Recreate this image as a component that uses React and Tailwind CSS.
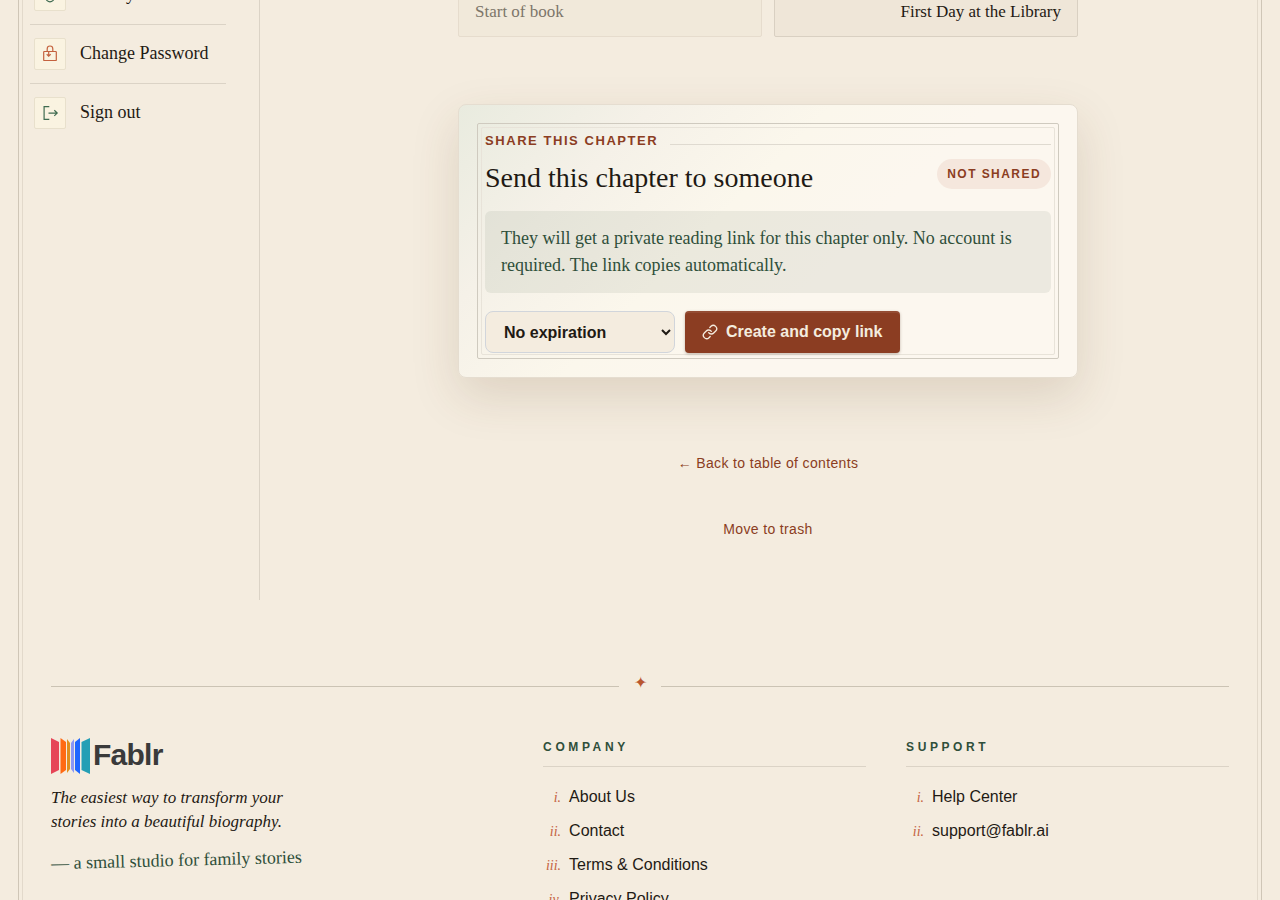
import { Link } from "lucide-react";

// ====================================================================
// Icons
// ====================================================================
const PrivacyIcon = () => (
  <svg width="18" height="18" viewBox="0 0 18 18" fill="none" stroke="currentColor" strokeWidth="1.3" aria-hidden="true">
    <path d="M6 8V4h6v4" />
    <circle cx="9" cy="11.8" r="4" />
  </svg>
);

const PasswordIcon = () => (
  <svg width="18" height="18" viewBox="0 0 18 18" fill="none" stroke="currentColor" strokeWidth="1.2" aria-hidden="true">
    <rect x="2.7" y="6.5" width="12.6" height="9" rx="0.6" />
    <path d="M6.2 6.5V3.8a2.8 2.8 0 0 1 5.6 0v2.7" />
    <path d="M7.7 6.8v4.2M5.7 9.3l2 1.8 2-1.8" />
  </svg>
);

const SignOutIcon = () => (
  <svg width="18" height="18" viewBox="0 0 18 18" fill="none" stroke="currentColor" strokeWidth="1.2" aria-hidden="true">
    <path d="M8.3 2.6H3.1v12.8h5.2" />
    <path d="M7.5 9.1h8.6M13.3 6.3l2.9 2.8-2.9 2.8" />
  </svg>
);

const FablrLogo = () => (
  <a href="#home" className="flex h-9 items-center gap-[3px]" aria-label="Fablr">
    <svg width="39" height="38" viewBox="0 0 39 38" aria-hidden="true">
      <path d="M0 1l8 4v28l-8 4z" fill="#e64557" />
      <path d="M9.5 1l5.5 4v28l-5.5 4z" fill="#ff6a13" />
      <path d="M16 2l3 4v26l-3 4z" fill="#e08f1e" />
      <path d="M23 2l-3 4v26l3 4z" fill="#8a97f5" />
      <path d="M29 1l-5 4v28l5 4z" fill="#1f66ff" />
      <path d="M39 1l-8.5 4v28l8.5 4z" fill="#249fb5" />
    </svg>
    <span className="pb-0.5 text-[30px] leading-9 font-bold tracking-tight text-[#3a3a3a]">Fablr</span>
  </a>
);

// ====================================================================
// Sidebar
// ====================================================================
const navItems = [
  { label: "Privacy", href: "#privacy", icon: PrivacyIcon, color: "text-[#3f6b50]" },
  { label: "Change Password", href: "#password", icon: PasswordIcon, color: "text-[#c4623f]" },
  { label: "Sign out", href: "#sign-out", icon: SignOutIcon, color: "text-[#3f6b50]" },
];

const Sidebar = () => (
  <aside className="w-[237px] shrink-0 border-r border-[#dbd3c6] pr-[33px] pl-[7px]">
    <ul className="-mt-[34px] divide-y divide-[#dbd3c6]">
      {navItems.map(({ label, href, icon: Icon, color }) => (
        <li key={label}>
          <a href={href} className="flex items-center gap-3.5 px-1 py-[13px]">
            <span
              className={`flex size-8 items-center justify-center rounded-xs border border-[#e8e0cc] bg-[#faf3e1] ${color}`}>
              <Icon />
            </span>
            <span className="pb-0.5 font-['Liberation_Serif',serif] text-lg leading-7">{label}</span>
          </a>
        </li>
      ))}
    </ul>
  </aside>
);

// ====================================================================
// Chapter navigation + share card
// ====================================================================
const ChapterNav = () => (
  <nav className="-mt-[49px] grid grid-cols-2 gap-3 font-['Liberation_Serif',serif] text-[17px] leading-6">
    <div className="flex h-[86px] items-end rounded-xs border border-[#e6dccd] bg-[#f1e9da] px-4 pb-3 text-[#7d766a]">
      Start of book
    </div>
    <a
      href="#next"
      className="flex h-[86px] items-end justify-end rounded-xs border border-[#d9d0c2] bg-[#efe6d8] px-4 pb-3">
      First Day at the Library
    </a>
  </nav>
);

const ShareCard = () => (
  <section className="mt-[67px] rounded-lg border border-[#e5ddd0] bg-[linear-gradient(135deg,#e9ebdf_0%,#f5f1e8_22%,#fbf7ec_42%,#fcf7ef_60%)] p-[18px] shadow-[0_18px_48px_rgba(92,58,28,0.15)]">
    <div className="rounded-xs border border-[#cfcabf] p-[3px]">
      <div className="rounded-xs border border-[#e8e3d9] px-[3px] pt-[3px] pb-px">
        <div className="flex items-baseline gap-3">
          <p className="text-[13px] leading-5 font-bold tracking-[0.12em] text-[#8b3d22] uppercase">
            Share this chapter
          </p>
          <div className="flex-1 border-b border-[#dfdad0]" />
        </div>

        <div className="mt-2 flex items-start justify-between gap-4">
          <h2 className="font-['Liberation_Serif',serif] text-[28px] leading-[38px]">Send this chapter to someone</h2>
          <span className="rounded-full bg-[#f5e7dd] px-2.5 py-[5px] text-xs leading-5 font-bold tracking-[0.12em] text-[#8b3d22] uppercase">
            Not shared
          </span>
        </div>

        <p className="mt-3.5 rounded-md bg-[#2f4f2f]/8 px-4 py-3.5 font-['Liberation_Serif',serif] text-lg leading-[27px] text-[#2f4f3a]">
          They will get a private reading link for this chapter only. No account is required. The link copies
          automatically.
        </p>

        <div className="mt-[18px] flex flex-wrap gap-2.5">
          <select
            aria-label="Link expiration"
            defaultValue="none"
            className="h-[42px] w-[190px] rounded-lg border border-[#d1d5db] bg-[#f4ecdf] pl-3.5 text-base font-bold">
            <option value="none">No expiration</option>
            <option value="7">7 days</option>
            <option value="30">30 days</option>
          </select>
          <button
            type="button"
            className="flex h-[42px] items-center gap-2 rounded-sm bg-[#8b3d22] px-[17px] text-base font-bold text-[#f4ecdf] shadow-[inset_0_2px_0_rgba(255,255,255,0.08),0_1px_3px_rgba(60,30,10,0.3)]">
            <Link size={16} strokeWidth={2} aria-hidden="true" />
            Create and copy link
          </button>
        </div>
      </div>
    </div>
  </section>
);

// ====================================================================
// Footer
// ====================================================================
const numerals = ["i.", "ii.", "iii.", "iv."];

const FooterColumn = ({ title, links }) => (
  <div>
    <h3 className="border-b border-[#dbd3c6] pb-2.5 text-xs leading-[18px] font-bold tracking-[0.3em] text-[#2f4f3a] uppercase">
      {title}
    </h3>
    <ul className="mt-[18px] space-y-2.5">
      {links.map((link, idx) => (
        <li key={link} className="flex h-6 items-baseline gap-2 leading-6">
          <span className="w-[18px] text-right font-['Liberation_Serif',serif] text-sm leading-6 text-[#c4623f] italic">
            {numerals[idx]}
          </span>
          <a href="#footer" className="text-base">
            {link}
          </a>
        </li>
      ))}
    </ul>
  </div>
);

const Footer = () => (
  <footer className="px-7 pt-[77px]">
    <div className="flex items-center">
      <div className="flex-1 border-b border-[#cbc3b4]" />
      <span className="-mt-1.5 w-[42px] text-center text-base leading-6 text-[#b9572f]">✦</span>
      <div className="flex-1 border-b border-[#cbc3b4]" />
    </div>

    <div className="mt-[43px] grid grid-cols-[1.4fr_1fr_1fr] gap-10">
      <div className="font-['Liberation_Sans',sans-serif]">
        <FablrLogo />
        <p className="mt-3 max-w-[250px] font-['Liberation_Serif',serif] text-[17px] leading-6 italic">
          The easiest way to transform your stories into a beautiful biography.
        </p>
        <p className="mt-3 inline-block -rotate-[1.5deg] font-['Liberation_Serif',serif] text-lg leading-7 text-[#2f4f3a]">
          — a small studio for family stories
        </p>
      </div>
      <FooterColumn title="Company" links={["About Us", "Contact", "Terms & Conditions", "Privacy Policy"]} />
      <FooterColumn title="Support" links={["Help Center", "support@fablr.ai"]} />
    </div>
  </footer>
);

export default function App() {
  return (
    <div className="min-h-screen overflow-hidden bg-[#f4ecdf] px-[18px] font-['Liberation_Sans',Arial,sans-serif] text-[#1f1a14]">
      <div className="border-x border-[#cfc6b7] px-[3px]">
        <div className="min-h-screen border-x border-[#e2d9cb] pb-6">
          <div className="flex min-h-[600px]">
            <Sidebar />
            <main className="flex-1 pl-[19px]">
              <div className="mx-auto max-w-[620px]">
                <ChapterNav />
                <ShareCard />
                <div className="mt-[75px] flex flex-col items-center gap-[46px] text-sm tracking-wide text-[#8b3d22]">
                  <a href="#contents">← Back to table of contents</a>
                  <button type="button" className="tracking-wide">
                    Move to trash
                  </button>
                </div>
              </div>
            </main>
          </div>
          <Footer />
        </div>
      </div>
    </div>
  );
}
